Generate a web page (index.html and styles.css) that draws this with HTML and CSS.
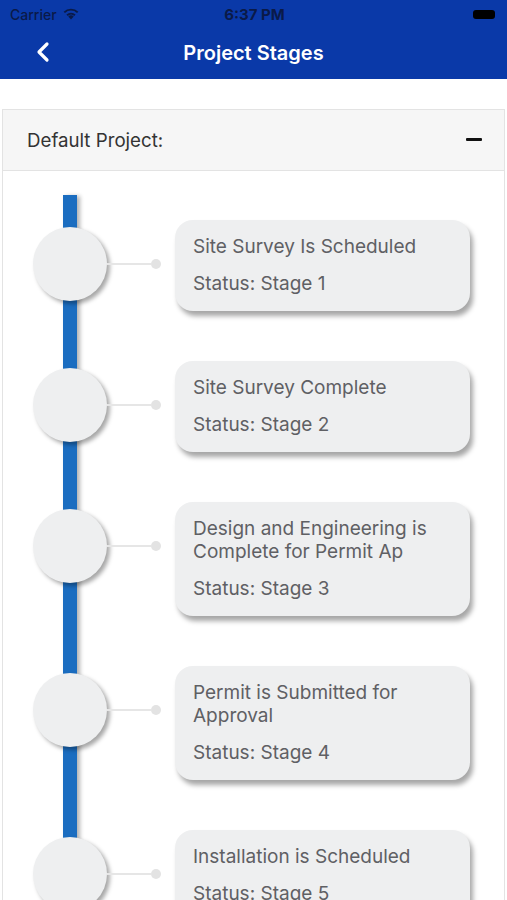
FILE: index.html
```html
<!DOCTYPE html>
<html>
<head>
<meta charset="utf-8">
<link rel="stylesheet" href="styles.css">
</head>
<body>
<header class="appbar">
  <div class="statusbar">
    <div class="sb-left">
      <span class="carrier">Carrier</span>
      <svg class="wifi" width="18" height="13" viewBox="0 0 18 13">
        <path d="M9 12.5 L6.3 9.6 A3.9 3.9 0 0 1 11.7 9.6 Z" fill="#0a1a48"/>
        <path d="M4.4 7.6 A6.6 6.6 0 0 1 13.6 7.6 L12.3 9 A4.8 4.8 0 0 0 5.7 9 Z" fill="#0a1a48"/>
        <path d="M1.6 4.7 A10.5 10.5 0 0 1 16.4 4.7 L15 6.1 A8.5 8.5 0 0 0 3 6.1 Z" fill="#0a1a48"/>
      </svg>
    </div>
    <div class="sb-time">6:37 PM</div>
    <div class="sb-right"><span class="battery"></span></div>
  </div>
  <nav class="navbar">
    <svg class="back" width="16" height="22" viewBox="0 0 16 22">
      <path d="M12 3 L4 11 L12 19" fill="none" stroke="#fff" stroke-width="3.2" stroke-linecap="round" stroke-linejoin="round"/>
    </svg>
    <h1 class="title">Project Stages</h1>
  </nav>
</header>

<main class="content">
  <section class="panel">
    <div class="panel-head">
      <span class="panel-title">Default Project:</span>
      <span class="minus"></span>
    </div>
    <div class="timeline">
      <div class="rail"></div>

      <div class="stage">
        <div class="node"></div>
        <div class="link"><span class="line"></span><span class="dot"></span></div>
        <div class="card">
          <div class="card-title">Site Survey Is Scheduled</div>
          <div class="card-status">Status: Stage 1</div>
        </div>
      </div>

      <div class="stage">
        <div class="node"></div>
        <div class="link"><span class="line"></span><span class="dot"></span></div>
        <div class="card">
          <div class="card-title">Site Survey Complete</div>
          <div class="card-status">Status: Stage 2</div>
        </div>
      </div>

      <div class="stage">
        <div class="node"></div>
        <div class="link"><span class="line"></span><span class="dot"></span></div>
        <div class="card">
          <div class="card-title">Design and Engineering is<br>Complete for Permit Ap</div>
          <div class="card-status">Status: Stage 3</div>
        </div>
      </div>

      <div class="stage">
        <div class="node"></div>
        <div class="link"><span class="line"></span><span class="dot"></span></div>
        <div class="card">
          <div class="card-title">Permit is Submitted for<br>Approval</div>
          <div class="card-status">Status: Stage 4</div>
        </div>
      </div>

      <div class="stage">
        <div class="node"></div>
        <div class="link"><span class="line"></span><span class="dot"></span></div>
        <div class="card">
          <div class="card-title">Installation is Scheduled</div>
          <div class="card-status">Status: Stage 5</div>
        </div>
      </div>
    </div>
  </section>
</main>
</body>
</html>
```

FILE: styles.css
```css
html, body {
  margin: 0;
  padding: 0;
  background: #ffffff;
  font-family: Inter, Roboto, "Liberation Sans", sans-serif;
  overflow: hidden;
  height: 900px;
}

.appbar {
  background: #0a39a8;
  height: 79px;
  display: flex;
  flex-direction: column;
}

.statusbar {
  height: 28px;
  display: flex;
  align-items: center;
  justify-content: space-between;
  padding: 0 12px 0 10px;
  color: #0a1a48;
}

.sb-left {
  display: flex;
  align-items: center;
  gap: 5px;
  width: 120px;
}

.carrier {
  font-size: 14px;
  font-weight: 500;
}

.wifi {
  margin-top: -2px;
}

.sb-time {
  font-size: 15px;
  font-weight: 700;
  margin-left: 4px;
}

.sb-right {
  width: 120px;
  display: flex;
  justify-content: flex-end;
}

.battery {
  display: block;
  width: 22px;
  height: 9px;
  background: #000;
  border-radius: 3px;
}

.navbar {
  flex: 1;
  display: flex;
  align-items: center;
  justify-content: center;
  position: relative;
}

.back {
  position: absolute;
  left: 35px;
  top: 13px;
}

.title {
  margin: 0 0 2px 0;
  color: #fff;
  font-size: 20px;
  font-weight: 600;
}

.content {
  padding-top: 30px;
}

.panel {
  margin: 0 2px;
  border: 1px solid #e3e3e3;
  border-bottom: none;
}

.panel-head {
  height: 60px;
  background: #f6f6f6;
  border-bottom: 1px solid #e3e3e3;
  display: flex;
  align-items: center;
  justify-content: space-between;
  padding: 0 22px 0 24px;
}

.panel-title {
  font-size: 18.7px;
  color: #333;
}

.minus {
  display: block;
  width: 16px;
  height: 3px;
  background: #111;
  border-radius: 1px;
  margin-top: -2px;
}

.timeline {
  position: relative;
  padding-top: 49px;
}

.rail {
  position: absolute;
  z-index: 0;
  left: 60px;
  top: 24px;
  width: 14px;
  height: 1000px;
  background: #1b6dc0;
  box-shadow: 3px 1px 4px rgba(0, 0, 0, 0.3);
}

.stage {
  position: relative;
  z-index: 1;
  display: flex;
  align-items: flex-start;
  padding-left: 30px;
  margin-bottom: 50px;
}

.node {
  flex-shrink: 0;
  width: 74px;
  height: 74px;
  margin-top: 7px;
  border-radius: 50%;
  background: #eeeff0;
  box-shadow: 3px 3px 4px rgba(0, 0, 0, 0.35);
}

.link {
  flex-shrink: 0;
  width: 54px;
  height: 74px;
  margin-top: 7px;
  display: flex;
  align-items: center;
}

.line {
  flex: 1;
  height: 2px;
  background: #e6e6e6;
}

.dot {
  width: 10px;
  height: 10px;
  border-radius: 50%;
  background: #e3e3e3;
}

.card {
  margin-left: 14px;
  width: 295px;
  box-sizing: border-box;
  background: #eeeff0;
  border-radius: 18px;
  padding: 15px 18px 16px 18px;
  box-shadow: 3px 5px 5px rgba(0, 0, 0, 0.35);
  color: #5f6064;
}

.card-title {
  font-size: 19px;
  line-height: 23px;
}

.card-status {
  font-size: 19px;
  line-height: 23px;
  margin-top: 14px;
}
```
